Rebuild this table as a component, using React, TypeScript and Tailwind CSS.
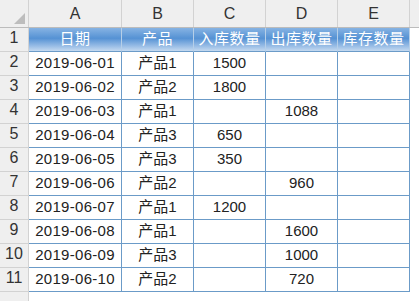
import React from 'react';

const cols = ['A', 'B', 'C', 'D', 'E'];
const widths = ['w-[93px]', 'w-[72px]', 'w-[72px]', 'w-[72px]', 'w-[72px]'];
const headers = ['日期', '产品', '入库数量', '出库数量', '库存数量'];

const rows: [string, string, string, string][] = [
  ['2019-06-01', '产品1', '1500', ''],
  ['2019-06-02', '产品2', '1800', ''],
  ['2019-06-03', '产品1', '', '1088'],
  ['2019-06-04', '产品3', '650', ''],
  ['2019-06-05', '产品3', '350', ''],
  ['2019-06-06', '产品2', '', '960'],
  ['2019-06-07', '产品1', '1200', ''],
  ['2019-06-08', '产品1', '', '1600'],
  ['2019-06-09', '产品3', '', '1000'],
  ['2019-06-10', '产品2', '', '720'],
];

const font = { fontFamily: '"Liberation Sans", "Noto Sans CJK SC", sans-serif' };

export default function App() {
  return (
    <div className="w-[419px] h-[301px] overflow-hidden bg-white text-[#222]" style={font}>
      {/* Column letters */}
      <div className="flex h-[28px] bg-[#efefef] border-b border-[#bcbcbc]">
        <div className="w-[29px] shrink-0 border-r border-[#d2d2d2] flex items-end justify-end pr-[3px] pb-[3px]">
          <svg width="11" height="11" viewBox="0 0 11 11">
            <polygon points="11,0 11,11 0,11" fill="#bdbdbd" />
          </svg>
        </div>
        {cols.map((c, i) => (
          <div
            key={c}
            className={`${widths[i]} shrink-0 border-r border-[#d2d2d2] flex items-end justify-center pb-[1px] text-[16px] text-[#333]`}
          >
            {c}
          </div>
        ))}
        <div className="flex-1" />
      </div>

      {/* Row 1 header */}
      <div className="flex h-[24px]">
        <div className="w-[29px] shrink-0 bg-[#efefef] border-r border-b border-[#d2d2d2] flex items-end justify-center pb-[1px] text-[16px] text-[#333]">
          1
        </div>
        {headers.map((h, i) => (
          <div
            key={h}
            className={`${widths[i]} shrink-0 border-r border-r-[#b6cfe8] border-b border-b-[#6b9bc8] bg-linear-to-b from-[#86b3e3] via-[#5592d4] via-45% to-[#c4d9f0] flex items-center justify-center text-white text-[15px] tracking-[0.5px]`}
          >
            {h}
          </div>
        ))}
        <div className="flex-1" />
      </div>

      {/* Data rows */}
      {rows.map((r, ri) => (
        <div key={ri} className="flex h-[24px]">
          <div className="w-[29px] shrink-0 bg-[#efefef] border-r border-b border-[#d2d2d2] flex items-end justify-center pb-[1px] text-[16px] text-[#333]">
            {ri + 2}
          </div>
          <div className={`${widths[0]} shrink-0 border-r border-b border-[#6b9bc8] flex items-center justify-center text-[15px] tracking-[0.3px]`}>
            {r[0]}
          </div>
          <div className={`${widths[1]} shrink-0 border-r border-b border-[#6b9bc8] flex items-center justify-center text-[15px]`}>
            {r[1]}
          </div>
          <div className={`${widths[2]} shrink-0 border-r border-b border-[#6b9bc8] flex items-center justify-center text-[15px]`}>
            {r[2]}
          </div>
          <div className={`${widths[3]} shrink-0 border-r border-b border-[#6b9bc8] flex items-center justify-center text-[15px]`}>
            {r[3]}
          </div>
          <div className={`${widths[4]} shrink-0 border-r border-b border-[#6b9bc8]`} />
          <div className="flex-1" />
        </div>
      ))}

      {/* Empty row below */}
      <div className="flex h-[24px]">
        <div className="w-[29px] shrink-0 bg-[#efefef] border-r border-[#d2d2d2]" />
        <div className="flex-1" />
      </div>
    </div>
  );
}
